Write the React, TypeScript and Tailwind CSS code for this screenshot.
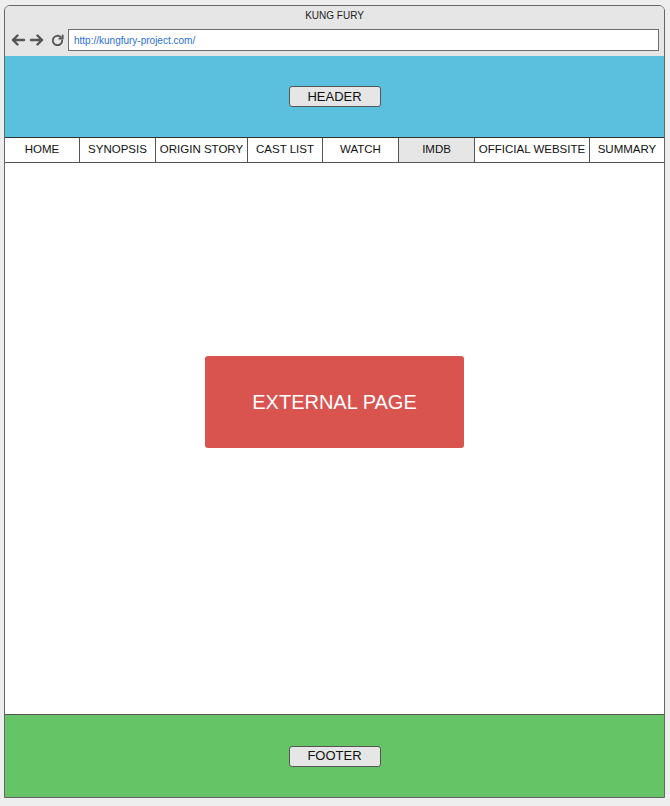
const tabs = [
  { label: "HOME", w: "w-[75px]" },
  { label: "SYNOPSIS", w: "w-[76px]" },
  { label: "ORIGIN STORY", w: "w-[92px]" },
  { label: "CAST LIST", w: "w-[75px]" },
  { label: "WATCH", w: "w-[76px]" },
  { label: "IMDB", w: "w-[76px]", active: true },
  { label: "OFFICIAL WEBSITE", w: "w-[115px]" },
  { label: "SUMMARY", w: "flex-1" },
];

function NavIcons() {
  return (
    <div className="flex items-center gap-[3px] pl-[5px] text-[#555555]">
      <svg width="16" height="16" viewBox="0 0 16 16" fill="none" stroke="currentColor" strokeWidth="2.4" strokeLinecap="round" strokeLinejoin="round">
        <path d="M14 8H3M7.5 3.5 3 8l4.5 4.5" />
      </svg>
      <svg width="16" height="16" viewBox="0 0 16 16" fill="none" stroke="currentColor" strokeWidth="2.4" strokeLinecap="round" strokeLinejoin="round">
        <path d="M2 8h11M8.5 3.5 13 8l-4.5 4.5" />
      </svg>
      <svg width="15" height="15" viewBox="0 0 16 16" fill="none" stroke="currentColor" strokeWidth="2" strokeLinecap="round" className="ml-[2px]">
        <path d="M13 8a5 5 0 1 1-1.6-3.7" />
        <path d="M13.5 2.5v3.5H10" strokeLinejoin="round" />
      </svg>
    </div>
  );
}

export default function App() {
  return (
    <div className="h-[806px] w-[670px] bg-[#eeeeee] pt-[5px] font-['Liberation_Sans',Arial,sans-serif]">
      <div className="ml-[4px] flex h-[793px] w-[661px] flex-col overflow-hidden rounded-t-[6px] border border-[#666666] bg-white">
        <div className="flex h-[50px] flex-col bg-[#e6e6e6]">
          <div className="pt-[4px] text-center text-[10px] leading-[12px] text-[#222222]">KUNG FURY</div>
          <div className="mt-[7px] flex items-center">
            <NavIcons />
            <div className="ml-[3px] flex h-[22px] w-[591px] items-center border border-[#6e6e6e] bg-white px-[5px] text-[10px] text-[#2a6fd6]">
              http://kungfury-project.com/
            </div>
          </div>
        </div>
        <header className="flex h-[82px] items-center justify-center border-b border-[#333333] bg-[#5bc0de]">
          <div className="flex h-[21px] w-[92px] items-center justify-center rounded-[3px] border border-[#555555] bg-[#e6e6e6] text-[13px] text-[#111111]">
            HEADER
          </div>
        </header>
        <nav className="flex h-[25px] border-b border-[#555555]">
          {tabs.map((t) => (
            <div
              key={t.label}
              className={`${t.w} flex items-center justify-center border-r border-[#555555] text-[11.5px] text-[#111111] last:border-r-0 ${t.active ? "bg-[#e6e6e6]" : "bg-white"}`}
            >
              {t.label}
            </div>
          ))}
        </nav>
        <main className="flex flex-1 items-center justify-center bg-white pb-[74px]">
          <div className="flex h-[92px] w-[259px] items-center justify-center rounded-[3px] bg-[#d9534f] text-[20px] text-white">
            EXTERNAL PAGE
          </div>
        </main>
        <footer className="flex h-[83px] items-center justify-center border-t border-[#555555] bg-[#64c466]">
          <div className="flex h-[21px] w-[92px] items-center justify-center rounded-[3px] border border-[#555555] bg-[#e6e6e6] text-[13px] text-[#111111]">
            FOOTER
          </div>
        </footer>
      </div>
    </div>
  );
}
